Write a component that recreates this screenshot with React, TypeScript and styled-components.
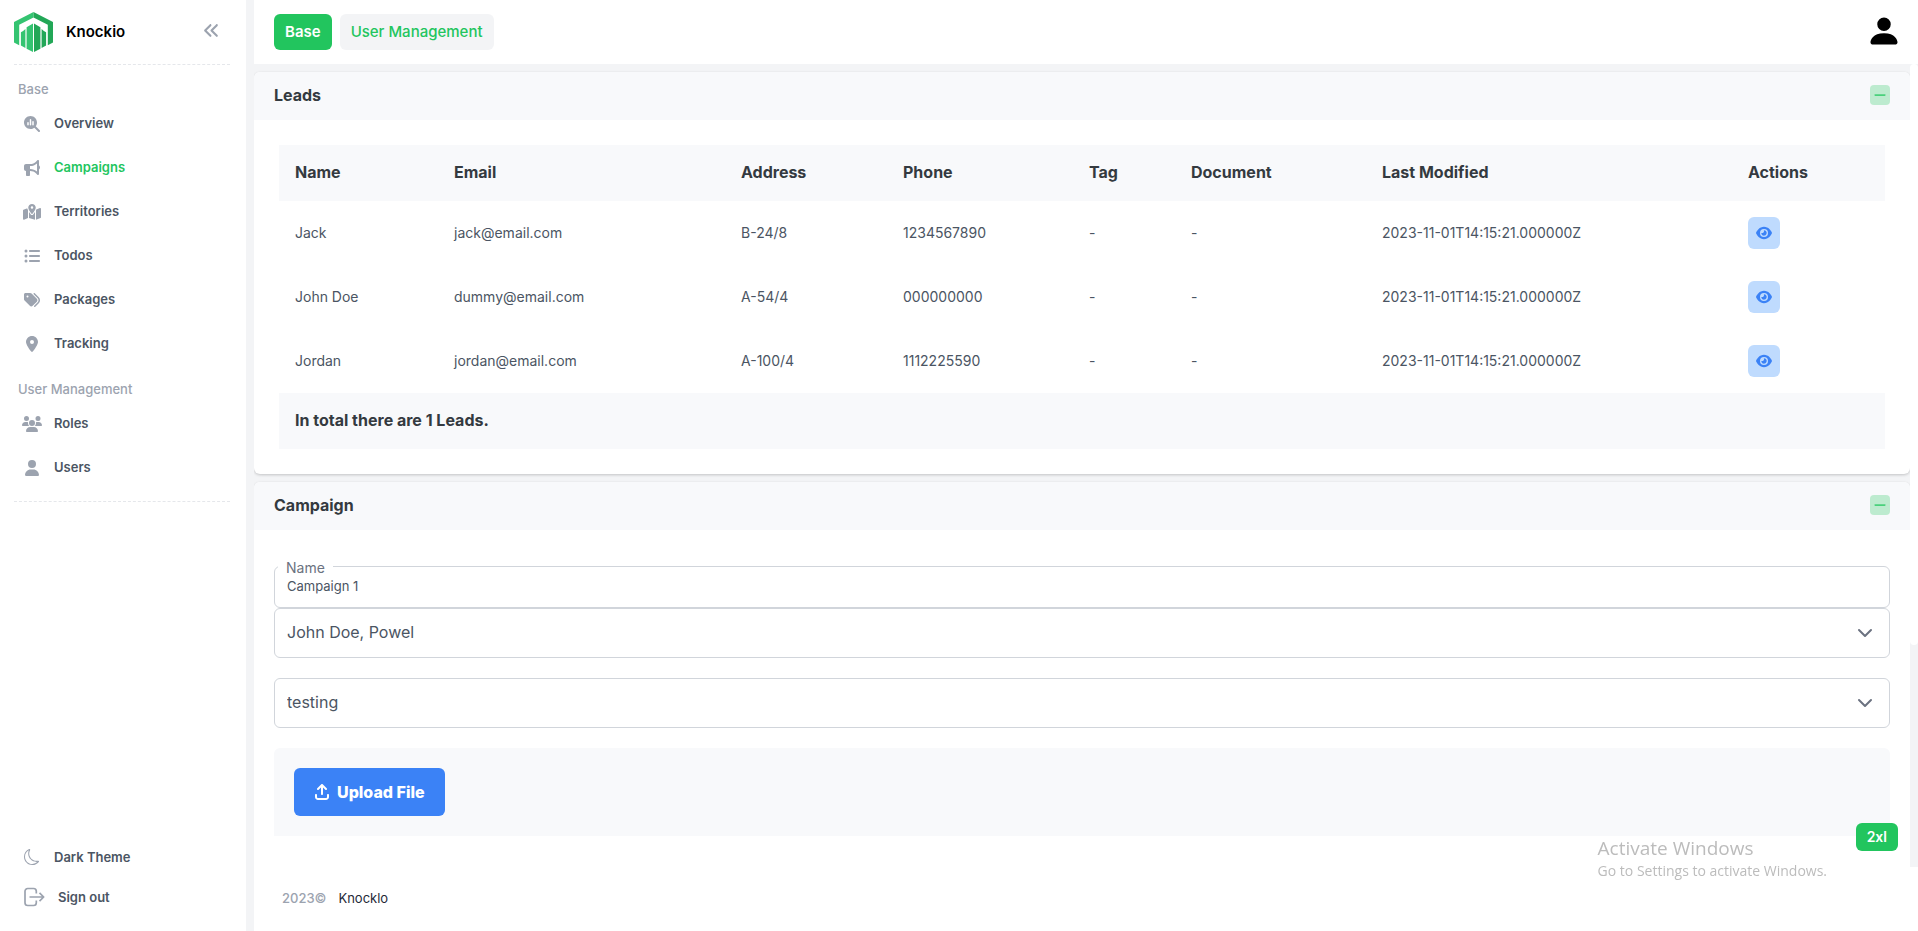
import React from "react";
import styled, { createGlobalStyle } from "styled-components";
import {
  FaMagnifyingGlassChart,
  FaBullhorn,
  FaMapLocationDot,
  FaListUl,
  FaTags,
  FaLocationDot,
  FaUsers,
  FaUser,
  FaAnglesLeft,
  FaEye,
  FaMinus,
  FaArrowUpFromBracket,
} from "react-icons/fa6";
import { BsMoon, BsPersonFill } from "react-icons/bs";

const GlobalStyle = createGlobalStyle`
  *, *::before, *::after { box-sizing: border-box; }
  body {
    margin: 0;
    background: #f3f4f6;
    color: #4b5563;
    font-family: Inter, "Open Sans", sans-serif;
    font-size: 14px;
    line-height: 20px;
  }
  button, input, select { font: inherit; color: inherit; margin: 0; }
  h1, h2, p { margin: 0; }
  a { color: inherit; text-decoration: none; }
`;

const Layout = styled.div`
  display: flex;
  gap: 8px;
  height: 100vh;
  overflow: hidden;
`;

const Sidebar = styled.aside`
  flex: 0 0 246px;
  display: flex;
  flex-direction: column;
  justify-content: space-between;
  padding: 0 16px 14px 14px;
  background: #fff;
`;

const Brand = styled.div`
  display: flex;
  align-items: center;
  height: 65px;
  padding-right: 10px;
  border-bottom: 1px dashed #e5e7eb;
`;

const BrandName = styled.h1`
  flex: 1;
  margin-left: 13px;
  color: #000;
  font-size: 15px;
  font-weight: 600;
`;

const CollapseButton = styled.button`
  display: flex;
  margin-bottom: 4px;
  padding: 0;
  border: 0;
  background: none;
  color: #9ca3af;
  font-size: 17px;
`;

const NavGroups = styled.nav`
  padding-top: 12px;
  padding-bottom: 12px;
  border-bottom: 1px dashed #e5e7eb;
`;

const GroupLabel = styled.h2`
  padding: 0 4px;
  color: #9ca3af;
  font-size: 13px;
  font-weight: 500;
  line-height: 24px;
`;

const NavList = styled.ul`
  margin: 0 0 12px;
  padding: 0;
  list-style: none;

  &:last-child { margin-bottom: 0; }
`;

const NavLink = styled.a<{ $active?: boolean }>`
  display: flex;
  align-items: center;
  gap: 12px;
  height: 44px;
  padding: 0 0 1px 8px;
  color: ${(p) => (p.$active ? "#22c55e" : "#4b5563")};
  font-size: 13px;
  font-weight: 600;
`;

const NavIcon = styled.span<{ $size?: number }>`
  display: flex;
  align-items: center;
  justify-content: center;
  width: 20px;
  height: 20px;
  margin-top: 3px;
  color: #9ca3af;
  font-size: ${(p) => p.$size ?? 16}px;

  svg { flex: none; }
`;

const SideActions = styled.div`
  display: flex;
  flex-direction: column;
`;

const SideAction = styled.button<{ $wide?: boolean }>`
  display: flex;
  align-items: center;
  gap: 12px;
  height: 40px;
  padding: 0 0 0 8px;
  border: 0;
  background: none;
  font-size: 13px;
  font-weight: 600;

  ${NavIcon} {
    width: ${(p) => (p.$wide ? 24 : 20)}px;
    margin-top: 0;
  }
`;

const Main = styled.main`
  flex: 1;
  min-width: 0;
  display: flex;
  flex-direction: column;
`;

const TopBar = styled.header`
  flex: none;
  display: flex;
  align-items: center;
  gap: 8px;
  height: 64px;
  padding: 0 16px 0 20px;
  background: #fff;
`;

const Tab = styled.button<{ $active?: boolean }>`
  height: 36px;
  padding: 0 11px;
  border: 0;
  border-radius: 6px;
  background: ${(p) => (p.$active ? "#22c55e" : "#f3f4f6")};
  color: ${(p) => (p.$active ? "#fff" : "#22c55e")};
  font-size: 15px;
  font-weight: ${(p) => (p.$active ? 600 : 500)};
`;

const AccountButton = styled.button`
  display: flex;
  margin-left: auto;
  padding: 0 0 2px;
  border: 0;
  background: none;
  color: #000;
  font-size: 36px;
`;

const ScrollRow = styled.div`
  flex: 1;
  min-height: 0;
  display: flex;
`;

const ScrollArea = styled.div`
  flex: 1;
  min-width: 0;
  display: flex;
  flex-direction: column;
  gap: 8px;
  padding-top: 8px;
  overflow: hidden;
`;

const ScrollTrack = styled.div`
  flex: 0 0 8px;
  background: #f3f4f6;
`;

const ScrollThumb = styled.div`
  height: 72.4%;
  border-radius: 4px;
  background: #fff;
`;

const Card = styled.section<{ $grow?: boolean }>`
  flex: ${(p) => (p.$grow ? "1 0 auto" : "none")};
  border-radius: ${(p) => (p.$grow ? "6px 6px 0 0" : "6px")};
  background: #fff;
  box-shadow: 0 1px 3px rgba(0, 0, 0, 0.2);
`;

const CardHeader = styled.div`
  display: flex;
  align-items: center;
  justify-content: space-between;
  height: 48px;
  padding: 0 20px 2px;
  border-radius: 6px 6px 0 0;
  background: #f8f9fb;
`;

const CardTitle = styled.h2`
  color: #343a40;
  font-size: 16px;
  font-weight: 700;
  line-height: 24px;
`;

const ToggleButton = styled.button`
  display: flex;
  align-items: center;
  justify-content: center;
  width: 20px;
  height: 20px;
  padding: 0;
  border: 0;
  border-radius: 4px;
  background: #bdebcf;
  color: #4ad17c;
  font-size: 14px;
`;

const TableBody = styled.div`
  padding: 25px;
`;

const LeadsTable = styled.table`
  width: 100%;
  table-layout: fixed;
  border-collapse: collapse;
  text-align: left;

  th, td { padding: 0 16px; }
  thead th, tfoot td {
    height: 56px;
    padding-bottom: 2px;
    background: #f8f9fb;
    color: #343a40;
    font-size: 16px;
    font-weight: 700;
  }
  tbody td { height: 64px; }
`;

const ViewButton = styled.button`
  display: flex;
  align-items: center;
  justify-content: center;
  width: 32px;
  height: 32px;
  padding: 0;
  border: 0;
  border-radius: 6px;
  background: #bfdbfe;
  color: #3b82f6;
  font-size: 16px;
`;

const Form = styled.form`
  padding: 36px 20px 20px;
`;

const Field = styled.div`
  position: relative;
`;

const FloatingLabel = styled.label`
  position: absolute;
  top: -8px;
  left: 4px;
  padding: 0 8px;
  background: #fff;
  color: #6b7280;
  font-size: 14px;
`;

const TextInput = styled.input`
  display: block;
  width: 100%;
  height: 42px;
  padding: 0 12px 2px;
  border: 1px solid #d1d5db;
  border-radius: 6px;
  background: #fff;
  font-size: 13px;
`;

const SelectField = styled.div`
  position: relative;
  margin-bottom: 20px;

  svg {
    position: absolute;
    top: 18px;
    right: 17px;
    pointer-events: none;
  }
`;

const Select = styled.select`
  display: block;
  width: 100%;
  height: 50px;
  padding: 0 12px 2px;
  border: 1px solid #d1d5db;
  border-radius: 6px;
  background: #fff;
  appearance: none;
  font-size: 16px;
`;

const UploadPanel = styled.div`
  padding: 20px;
  border-radius: 6px 6px 0 0;
  background: #f8f9fb;
`;

const UploadButton = styled.button`
  display: flex;
  align-items: center;
  gap: 7px;
  height: 48px;
  padding: 0 20px;
  border: 0;
  border-radius: 6px;
  background: #3b82f6;
  color: #fff;
  font-size: 16px;
  font-weight: 800;
`;

const Footer = styled.footer`
  flex: none;
  display: flex;
  align-items: center;
  gap: 12px;
  height: 64px;
  padding: 0 28px 2px;
  background: #fff;
  color: #9ca3af;
  font-size: 13px;
  font-weight: 500;

  a { color: #1f2937; font-weight: 400; }
`;

const BreakpointBadge = styled.div`
  position: fixed;
  right: 20px;
  bottom: 80px;
  padding: 4px 11px;
  border-radius: 6px;
  background: #22c55e;
  color: #fff;
  font-weight: 600;
`;

const ActivationNotice = styled.div`
  position: fixed;
  right: 91px;
  bottom: 50px;
  color: #bcbcbc;
  font-family: "Open Sans", sans-serif;
  font-size: 14px;
  pointer-events: none;
`;

const NoticeTitle = styled.p`
  font-size: 19px;
  line-height: 26px;
`;

const Logo = () => (
  <svg width="39" height="40" viewBox="0 0 39 40" aria-hidden="true">
    <path d="M19.500 0 0 10v20.500l5.200 2.700V12.800l14.300-7.300Z" fill="#34c471" />
    <path d="M19.500 0 39 10v20.500l-5.200 2.700V12.800L19.500 5.500Z" fill="#22a757" />
    <path d="M19 11.500V40l-6.400-3.300V15.200ZM11.400 17v19l-4.500-2.400V20.200l2.200-1.300Z" fill="#34c471" />
    <path d="M20 11.500V40l6.400-3.300V15.200ZM27.600 17v19l4.500-2.400V20.200l-2.200-1.300Z" fill="#22a757" />
  </svg>
);

const SignOutIcon = () => (
  <svg width="22" height="20" viewBox="0 0 22 20" fill="none" stroke="currentColor" strokeWidth="1.700" strokeLinejoin="round" aria-hidden="true">
    <path d="M13.300 6.500V4.200A2.700 2.700 0 0 0 10.600 1.500H4.700A2.700 2.700 0 0 0 2 4.200v11.600a2.700 2.700 0 0 0 2.700 2.700h5.900a2.700 2.700 0 0 0 2.700-2.700v-2.300" />
    <path d="M6.500 10h14M16.500 5.800l4.200 4.200-4.200 4.200" />
  </svg>
);

const Chevron = () => (
  <svg width="16" height="14" viewBox="0 0 16 14" aria-hidden="true">
    <path d="m2 4 6 6 6-6" fill="none" stroke="#6b7280" strokeWidth="2" strokeLinecap="round" strokeLinejoin="round" />
  </svg>
);

type LinkItem = { label: string; icon: React.ReactNode; size?: number; active?: boolean };

const baseLinks: LinkItem[] = [
  { label: "Overview", icon: <FaMagnifyingGlassChart /> },
  { label: "Campaigns", icon: <FaBullhorn />, active: true },
  { label: "Territories", icon: <FaMapLocationDot />, size: 18 },
  { label: "Todos", icon: <FaListUl /> },
  { label: "Packages", icon: <FaTags /> },
  { label: "Tracking", icon: <FaLocationDot /> },
];

const userLinks: LinkItem[] = [
  { label: "Roles", icon: <FaUsers />, size: 20 },
  { label: "Users", icon: <FaUser /> },
];

const columns = [
  { label: "Name", width: 159 },
  { label: "Email", width: 287 },
  { label: "Address", width: 162 },
  { label: "Phone", width: 186 },
  { label: "Tag", width: 102 },
  { label: "Document", width: 191 },
  { label: "Last Modified", width: 366 },
  { label: "Actions", width: 153 },
];

const totalWidth = columns.reduce((sum, c) => sum + c.width, 0);

const leads = [
  ["Jack", "jack@email.com", "B-24/8", "1234567890", "-", "-", "2023-11-01T14:15:21.000000Z"],
  ["John Doe", "dummy@email.com", "A-54/4", "000000000", "-", "-", "2023-11-01T14:15:21.000000Z"],
  ["Jordan", "jordan@email.com", "A-100/4", "1112225590", "-", "-", "2023-11-01T14:15:21.000000Z"],
];

const NavGroup = ({ title, links }: { title: string; links: LinkItem[] }) => (
  <>
    <GroupLabel>{title}</GroupLabel>
    <NavList>
      {links.map((l) => (
        <li key={l.label}>
          <NavLink href="#" $active={l.active}>
            <NavIcon $size={l.size}>{l.icon}</NavIcon>
            {l.label}
          </NavLink>
        </li>
      ))}
    </NavList>
  </>
);

export default function App() {
  return (
    <>
      <GlobalStyle />
      <Layout>
        <Sidebar>
          <div>
            <Brand>
              <Logo />
              <BrandName>Knockio</BrandName>
              <CollapseButton type="button" aria-label="Collapse sidebar">
                <FaAnglesLeft />
              </CollapseButton>
            </Brand>
            <NavGroups>
              <NavGroup title="Base" links={baseLinks} />
              <NavGroup title="User Management" links={userLinks} />
            </NavGroups>
          </div>
          <SideActions>
            <SideAction type="button">
              <NavIcon><BsMoon /></NavIcon>
              Dark Theme
            </SideAction>
            <SideAction type="button" $wide>
              <NavIcon><SignOutIcon /></NavIcon>
              Sign out
            </SideAction>
          </SideActions>
        </Sidebar>

        <Main>
          <TopBar>
            <Tab type="button" $active>Base</Tab>
            <Tab type="button">User Management</Tab>
            <AccountButton type="button" aria-label="Account">
              <BsPersonFill />
            </AccountButton>
          </TopBar>

          <ScrollRow>
            <ScrollArea>
              <Card>
                <CardHeader>
                  <CardTitle>Leads</CardTitle>
                  <ToggleButton type="button" aria-label="Collapse leads"><FaMinus /></ToggleButton>
                </CardHeader>
                <TableBody>
                  <LeadsTable>
                    <colgroup>
                      {columns.map((c) => (
                        <col key={c.label} style={{ width: `${(c.width / totalWidth) * 100}%` }} />
                      ))}
                    </colgroup>
                    <thead>
                      <tr>{columns.map((c) => <th key={c.label} scope="col">{c.label}</th>)}</tr>
                    </thead>
                    <tbody>
                      {leads.map((row) => (
                        <tr key={row[0]}>
                          {row.map((cell, i) => <td key={i}>{cell}</td>)}
                          <td>
                            <ViewButton type="button" aria-label={`View ${row[0]}`}><FaEye /></ViewButton>
                          </td>
                        </tr>
                      ))}
                    </tbody>
                    <tfoot>
                      <tr><td colSpan={8}>In total there are 1 Leads.</td></tr>
                    </tfoot>
                  </LeadsTable>
                </TableBody>
              </Card>

              <Card $grow>
                <CardHeader>
                  <CardTitle>Campaign</CardTitle>
                  <ToggleButton type="button" aria-label="Collapse campaign"><FaMinus /></ToggleButton>
                </CardHeader>
                <Form>
                  <Field>
                    <TextInput id="campaign-name" defaultValue="Campaign 1" />
                    <FloatingLabel htmlFor="campaign-name">Name</FloatingLabel>
                  </Field>
                  <SelectField>
                    <Select aria-label="Assignees"><option>John Doe, Powel</option></Select>
                    <Chevron />
                  </SelectField>
                  <SelectField>
                    <Select aria-label="Package"><option>testing</option></Select>
                    <Chevron />
                  </SelectField>
                  <UploadPanel>
                    <UploadButton type="button">
                      <FaArrowUpFromBracket />
                      Upload File
                    </UploadButton>
                  </UploadPanel>
                </Form>
              </Card>
            </ScrollArea>
            <ScrollTrack><ScrollThumb /></ScrollTrack>
          </ScrollRow>

          <Footer>
            <span>2023©</span>
            <a href="#">Knocklo</a>
          </Footer>
        </Main>
      </Layout>
      <BreakpointBadge>2xl</BreakpointBadge>
      <ActivationNotice>
        <NoticeTitle>Activate Windows</NoticeTitle>
        <p>Go to Settings to activate Windows.</p>
      </ActivationNotice>
    </>
  );
}
